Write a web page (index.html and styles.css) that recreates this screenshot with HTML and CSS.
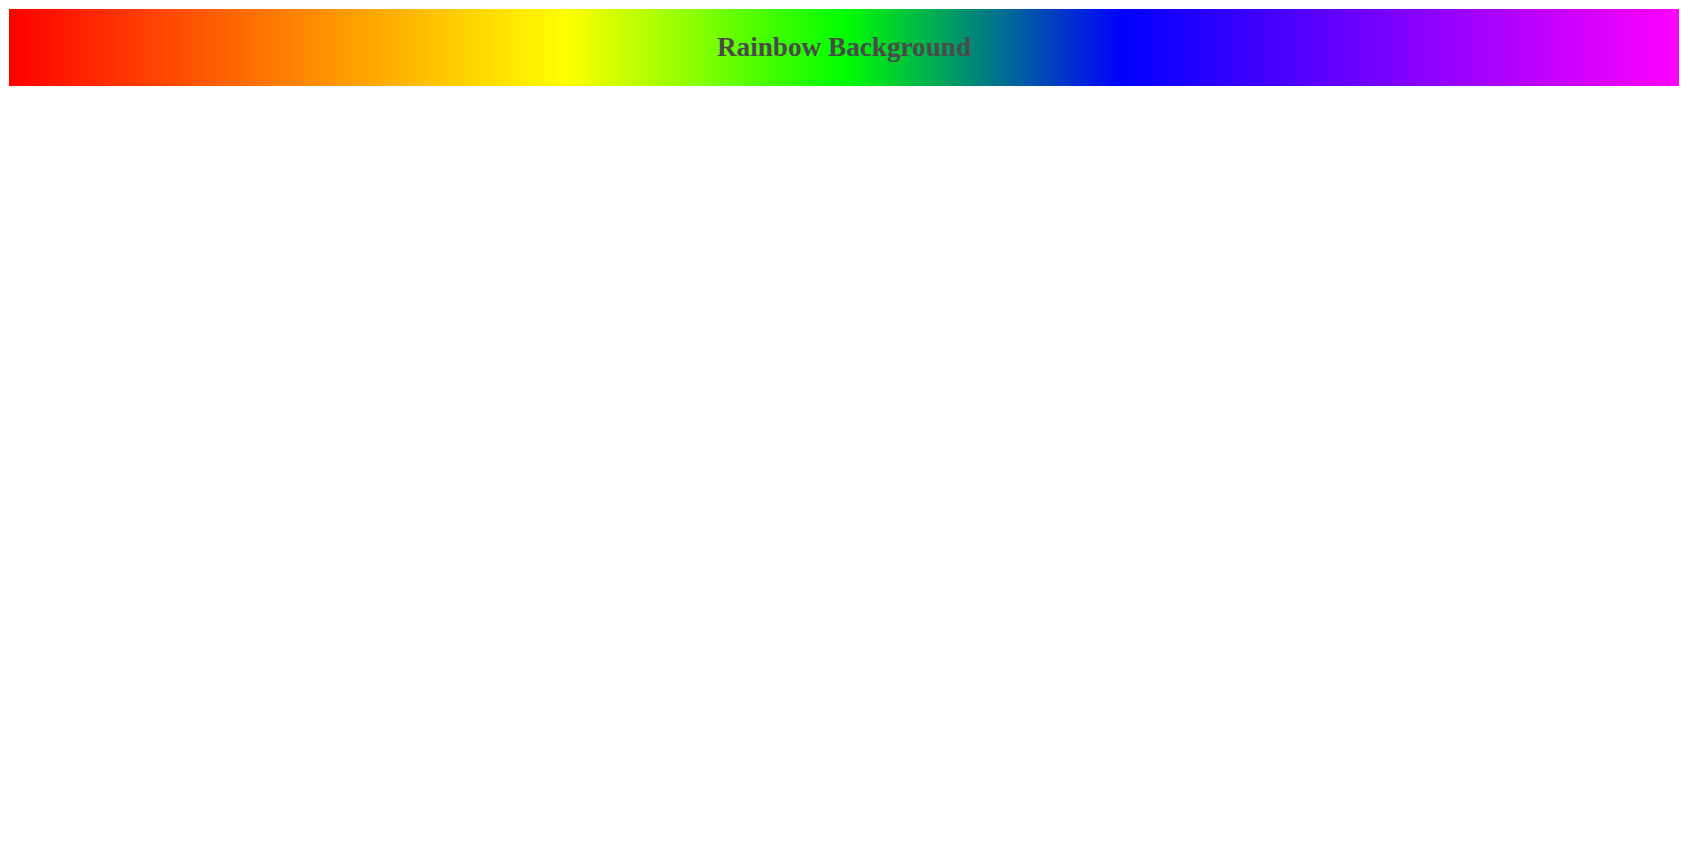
FILE: index.html
```html
<!DOCTYPE html>
<html>
<head>
<meta charset="utf-8">
<title>Rainbow Background</title>
<link rel="stylesheet" href="styles.css">
</head>
<body>
<div class="rainbow">
  <h1 class="title">Rainbow Background</h1>
</div>
</body>
</html>
```
FILE: styles.css
```css
body {
  margin: 8px;
  background: #fff;
  font-family: "Liberation Serif", "Times New Roman", serif;
}
.rainbow {
  margin: 1px;
  background: linear-gradient(to right, #ff0000 0%, #ffff00 33.33%, #00ff00 50%, #0000ff 66.67%, #ff00ff 100%);
  padding: 23px 20px;
  text-align: center;
}
.title {
  margin: 0;
  font-size: 27.2px;
  font-weight: bold;
  color: #4a4a4a;
}
```
